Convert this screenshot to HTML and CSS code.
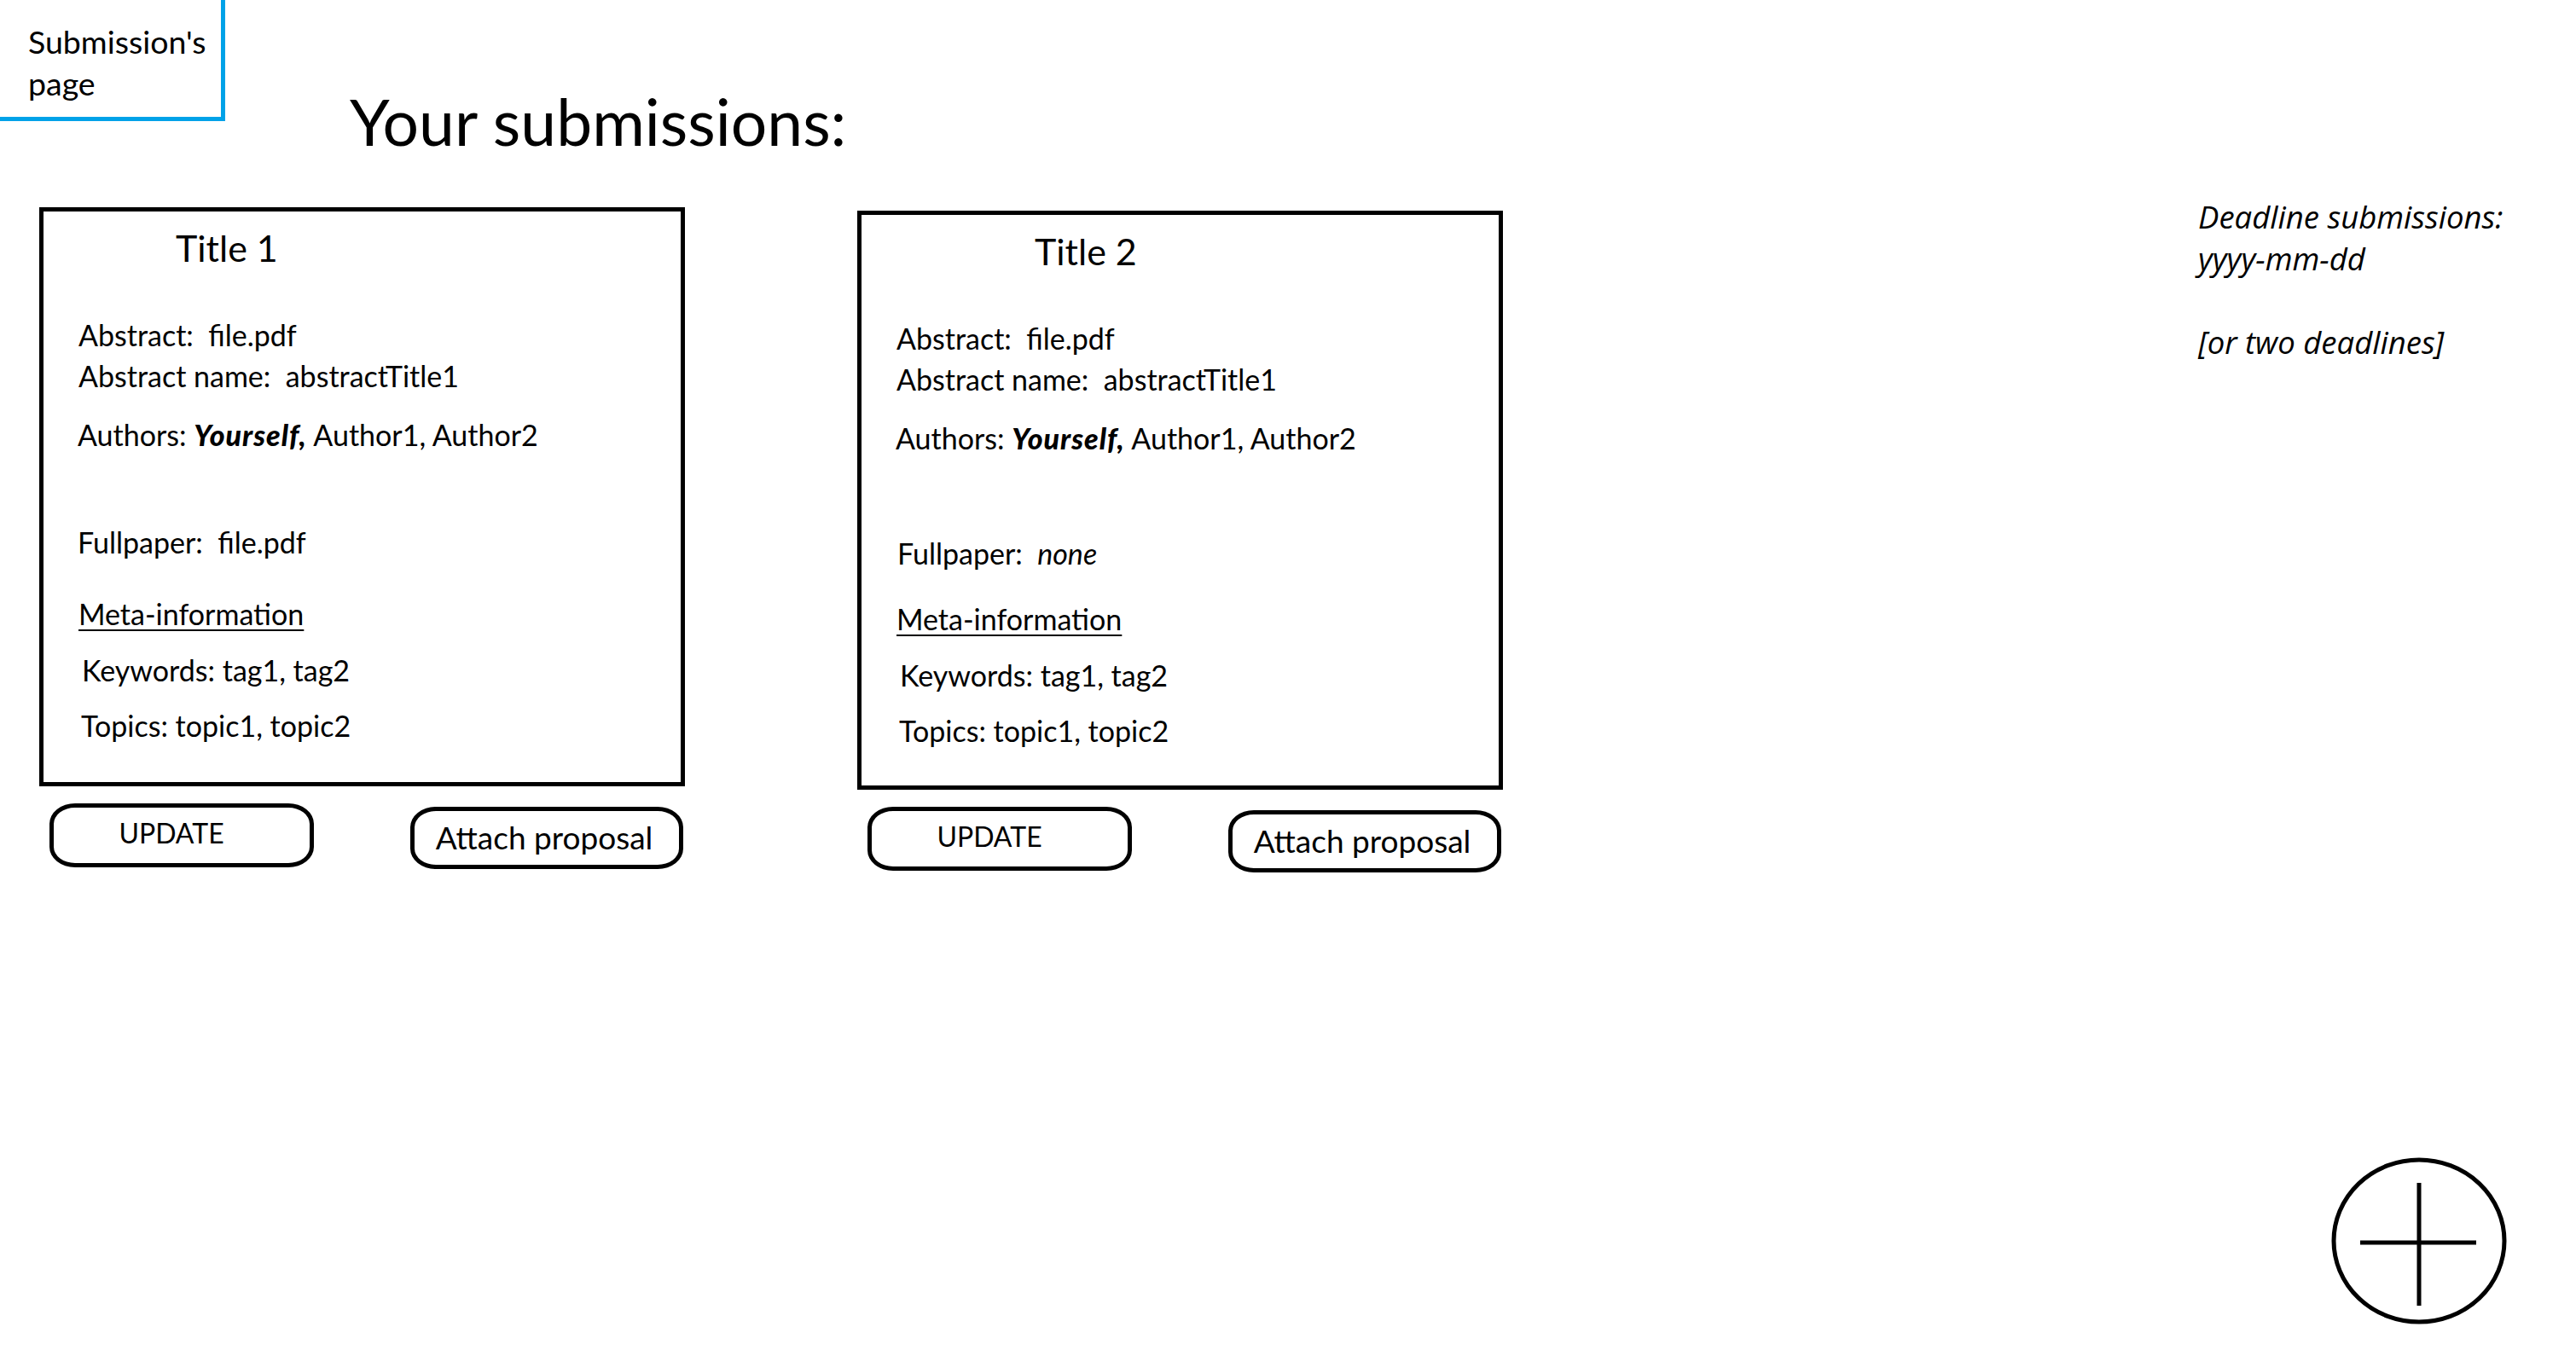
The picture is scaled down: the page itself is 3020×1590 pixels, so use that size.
FILE: index.html
```html
<!DOCTYPE html>
<html lang="en">
<head>
<meta charset="utf-8">
<title>Submission's page</title>
<link rel="stylesheet" href="styles.css">
</head>
<body>
<header class="top">
  <nav class="navbox">Submission's<br>page</nav>
  <h1 class="heading">Your submissions:</h1>
</header>
<main class="content">
  <section class="sub sub-first">
    <div class="card">
      <h2 class="card-title">Title 1</h2>
      <p class="row r-abs">Abstract:&nbsp; file.pdf</p>
      <p class="row r-name">Abstract name:&nbsp; abstractTitle1</p>
      <p class="row r-auth">Authors: <b class="me"><i>Yourself,</i></b> Author1, Author2</p>
      <p class="row r-full">Fullpaper:&nbsp; file.pdf</p>
      <p class="row r-meta"><u>Meta-information</u></p>
      <p class="row r-kw">Keywords: tag1, tag2</p>
      <p class="row r-top">Topics: topic1, topic2</p>
    </div>
    <div class="actions">
      <button class="btn btn-update">UPDATE</button>
      <button class="btn btn-attach">Attach proposal</button>
    </div>
  </section>
  <section class="sub sub-second">
    <div class="card card-alt">
      <h2 class="card-title">Title 2</h2>
      <p class="row r-abs">Abstract:&nbsp; file.pdf</p>
      <p class="row r-name">Abstract name:&nbsp; abstractTitle1</p>
      <p class="row r-auth">Authors: <b class="me"><i>Yourself,</i></b> Author1, Author2</p>
      <p class="row r-full">Fullpaper:&nbsp; <i>none</i></p>
      <p class="row r-meta"><u>Meta-information</u></p>
      <p class="row r-kw">Keywords: tag1, tag2</p>
      <p class="row r-top">Topics: topic1, topic2</p>
    </div>
    <div class="actions">
      <button class="btn btn-update">UPDATE</button>
      <button class="btn btn-attach">Attach proposal</button>
    </div>
  </section>
  <aside class="deadline">
    <p class="dl-line">Deadline submissions:</p>
    <p class="dl-line">yyyy-mm-dd</p>
    <p class="dl-line dl-gap">[or two deadlines]</p>
  </aside>
</main>
<button class="fab" aria-label="Add submission">
  <svg class="fab-icon" width="206" height="196" viewBox="0 0 206 196">
    <ellipse cx="103" cy="98" rx="100" ry="95" fill="none" stroke="#000" stroke-width="5"/>
    <line x1="34" y1="100" x2="170" y2="100" stroke="#000" stroke-width="5"/>
    <line x1="103" y1="30" x2="103" y2="174" stroke="#000" stroke-width="5"/>
  </svg>
</button>
</body>
</html>
```

FILE: styles.css
```css
* { box-sizing: border-box; }
html, body { margin: 0; padding: 0; background: #fff; }
body {
  width: 3020px;
  height: 1590px;
  position: relative;
  overflow: hidden;
  font-family: Lato, "Noto Sans", sans-serif;
  color: #000;
}
p { margin: 0; }

.top {
  display: flex;
  align-items: flex-start;
  height: 139px;
}
.navbox {
  flex: none;
  width: 264px;
  height: 142px;
  border-right: 5px solid #00a2e8;
  border-bottom: 5px solid #00a2e8;
  padding: 24px 0 0 33px;
  font-size: 37.5px;
  line-height: 49px;
}
.heading {
  margin: 98px 0 0 146px;
  font-weight: 400;
  font-size: 75px;
  line-height: 88px;
  white-space: nowrap;
}

.content {
  display: flex;
  align-items: flex-start;
  padding: 91px 0 0 46px;
}
.sub { width: 757px; flex: none; }
.sub-first { margin-top: 13px; }
.sub-second { margin-top: 17px; margin-left: 202px; }

.card {
  height: 679px;
  border: 5px solid #000;
  padding: 15px 0 0 41px;
  font-size: 34px;
  line-height: 48px;
}
.card-title {
  margin: 0 0 0 114px;
  font-weight: 400;
  font-size: 43px;
  line-height: 56px;
}
.card-alt .card-title { margin-left: 162px; }
.r-abs { margin-top: 50px; }
.r-auth { margin-top: 21px; margin-left: -1px; }
.me { font-weight: 900; letter-spacing: 1px; }
.r-full { margin-top: 78px; margin-left: -1px; }
.r-meta { margin-top: 36px; }
.r-meta u { text-decoration-thickness: 2px; text-underline-offset: 5px; }
.r-kw { margin-top: 18px; margin-left: 4px; }
.r-top { margin-top: 17px; margin-left: 3px; }
.card-alt .r-full { margin-top: 87px; margin-left: 1px; }
.card-alt .r-meta { margin-top: 29px; }

.actions {
  display: flex;
  justify-content: space-between;
  align-items: flex-start;
  margin-top: 20px;
  padding: 0 2px 0 12px;
}
.btn {
  background: #fff;
  border: 5px solid #000;
  border-radius: 30px / 24px;
  font-family: Lato, "Noto Sans", sans-serif;
  color: #000;
  padding: 0;
  cursor: pointer;
}
.btn-update {
  width: 310px;
  height: 75px;
  font-size: 32px;
  padding: 0 24px 6px 0;
}
.btn-attach {
  width: 320px;
  height: 73px;
  margin-top: 4px;
  font-size: 37px;
  padding: 0 6px 2px 0;
}

.deadline {
  flex: none;
  margin-left: 815px;
  font-family: "Open Sans", "Noto Sans", sans-serif;
  font-style: italic;
  font-size: 36.5px;
  line-height: 48.5px;
  white-space: nowrap;
}
.dl-gap { margin-top: 50px; }

.fab {
  position: absolute;
  left: 2733px;
  top: 1357px;
  width: 206px;
  height: 196px;
  padding: 0;
  border: 0;
  background: transparent;
  cursor: pointer;
}
.fab-icon { display: block; }
```
